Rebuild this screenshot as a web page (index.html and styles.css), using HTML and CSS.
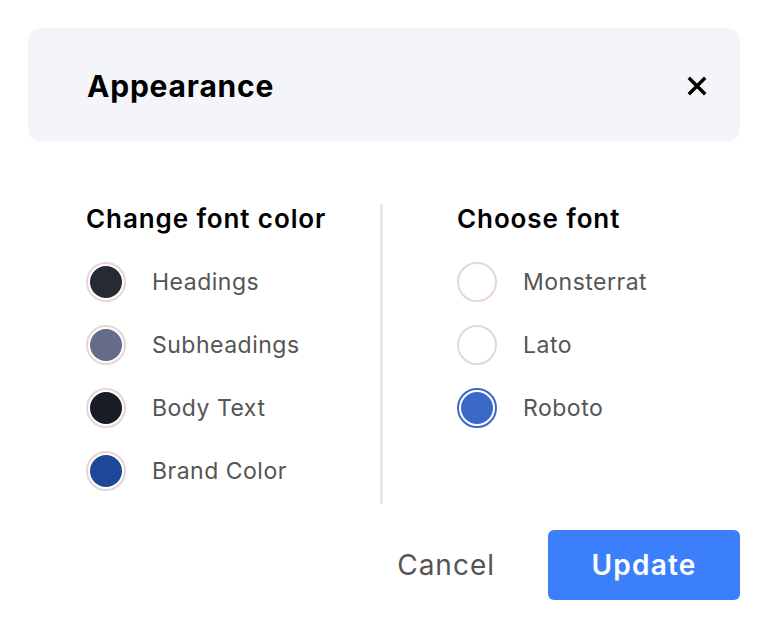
FILE: index.html
```html
<!DOCTYPE html>
<html lang="en">
<head>
    <meta charset="UTF-8">
    <meta name="viewport" content="width=device-width, initial-scale=1.0">
    <title>Appearance</title>
    <link rel="stylesheet" href="styles.css">
</head>
<body>
    <div class="dialog">
        <div class="header">
            <h1 class="title">Appearance</h1>
            <button class="close" aria-label="Close">
                <svg width="20" height="20" viewBox="0 0 20 20">
                    <path d="M3 3 L17 17 M17 3 L3 17" stroke="#000" stroke-width="3.4" stroke-linecap="square"/>
                </svg>
            </button>
        </div>

        <div class="content">
            <div class="column column-left">
                <h2 class="section-title">Change font color</h2>
                <ul class="options">
                    <li class="option"><span class="swatch" style="background-color: #252a34"></span>Headings</li>
                    <li class="option"><span class="swatch" style="background-color: #656c8a"></span>Subheadings</li>
                    <li class="option"><span class="swatch" style="background-color: #1a1d27"></span>Body Text</li>
                    <li class="option"><span class="swatch" style="background-color: #1f4797"></span>Brand Color</li>
                </ul>
            </div>
            <div class="divider"></div>
            <div class="column column-right">
                <h2 class="section-title">Choose font</h2>
                <ul class="options">
                    <li class="option"><span class="radio"></span>Monsterrat</li>
                    <li class="option"><span class="radio"></span>Lato</li>
                    <li class="option"><span class="radio checked"></span>Roboto</li>
                </ul>
            </div>
        </div>

        <div class="footer">
            <button class="btn-cancel">Cancel</button>
            <button class="btn-update">Update</button>
        </div>
    </div>
</body>
</html>
```

FILE: styles.css
```css
body {
    font-family: Inter, "Noto Sans", sans-serif;
    background-color: #fff;
    color: #000;
    margin: 0;
}
.dialog {
    padding: 28px 26px 26px 28px;
}
.header {
    height: 113px;
    background-color: #f4f5f9;
    border-radius: 12px;
    display: flex;
    align-items: center;
    justify-content: space-between;
    padding: 2px 33px 0 59px;
    box-sizing: border-box;
}
.title {
    margin: 0;
    font-size: 30px;
    font-weight: 700;
    letter-spacing: 0.8px;
}
.close {
    background: none;
    border: none;
    padding: 0;
    width: 20px;
    height: 20px;
    cursor: pointer;
}
.close svg {
    display: block;
}
.content {
    display: flex;
    margin-top: 63px;
    padding-left: 58px;
}
.column-left {
    width: 294px;
}
.column-right {
    padding-left: 74px;
}
.divider {
    width: 3px;
    height: 300px;
    background-color: #e6e6e6;
}
.section-title {
    margin: 0;
    font-size: 26px;
    line-height: 30px;
    font-weight: 600;
    letter-spacing: 0.9px;
}
.options {
    list-style: none;
    margin: 28px 0 0;
    padding: 0;
    display: flex;
    flex-direction: column;
    gap: 23px;
}
.option {
    display: flex;
    align-items: center;
    height: 40px;
    font-size: 23px;
    letter-spacing: 0.5px;
    color: #555;
}
.swatch,
.radio {
    width: 40px;
    height: 40px;
    box-sizing: border-box;
    border-radius: 50%;
    border: 2px solid #e6d6d6;
    padding: 2px;
    background-clip: content-box;
    margin-right: 26px;
    flex-shrink: 0;
}
.radio {
    background-color: #fff;
}
.radio.checked {
    border-color: #3b69c9;
    background-color: #3b69c9;
}
.footer {
    display: flex;
    justify-content: flex-end;
    align-items: center;
    margin-top: 26px;
    gap: 53px;
}
.btn-cancel {
    background: none;
    border: none;
    padding: 0;
    font-family: inherit;
    font-size: 28px;
    letter-spacing: 1px;
    color: #555;
    cursor: pointer;
}
.btn-update {
    width: 192px;
    height: 70px;
    background-color: #3b7ffa;
    color: #fff;
    border: none;
    border-radius: 6px;
    font-family: inherit;
    font-size: 28px;
    font-weight: 600;
    letter-spacing: 1.2px;
    cursor: pointer;
}
```
